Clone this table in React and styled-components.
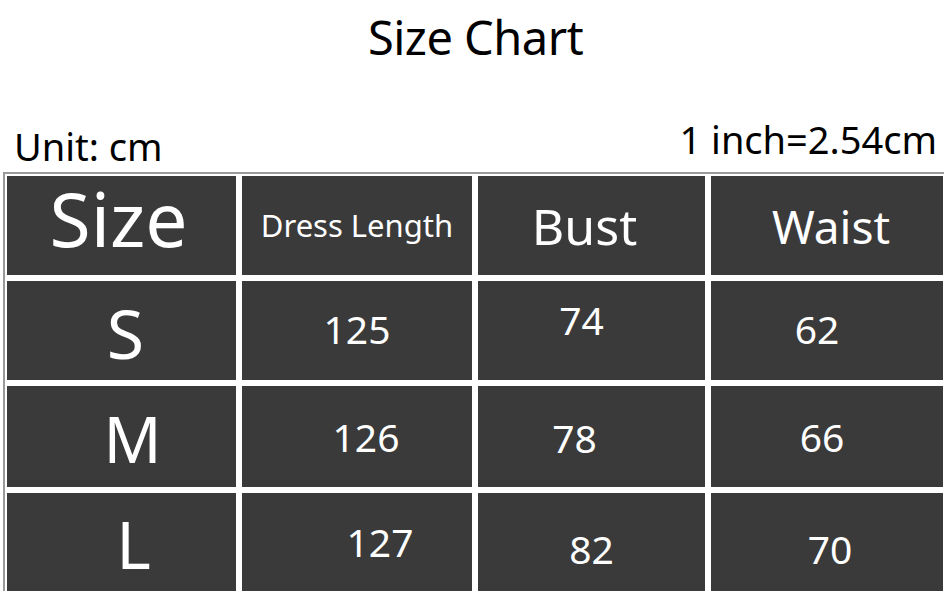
import React from 'react';
import styled, { createGlobalStyle } from "styled-components";

const GlobalStyle = createGlobalStyle`
  body{
    margin: 0;
    background: #ffffff;
    font-family: "Noto Sans", "Open Sans", sans-serif;
  }
`;

const header = [
    { label: 'Size', size: 75, dx: -3, dy: -7 },
    { label: 'Dress Length', size: 31, dx: 0, dy: 0 },
    { label: 'Bust', size: 50, dx: -7, dy: 0 },
    { label: 'Waist', size: 46, dx: 4, dy: 0 },
];

const rows = [
    [{ v: 'S', size: 68, dx: 4, dy: 2 }, { v: '125', dx: 0, dy: -2 }, { v: '74', dx: -10, dy: -11 }, { v: '62', dx: -10, dy: -2 }],
    [{ v: 'M', size: 64, dx: 11, dy: 2 }, { v: '126', dx: 9, dy: 0 }, { v: '78', dx: -17, dy: 1 }, { v: '66', dx: -5, dy: 0 }],
    [{ v: 'L', size: 66, dx: 12, dy: 1 }, { v: '127', dx: 23, dy: -1 }, { v: '82', dx: 0, dy: 6 }, { v: '70', dx: 3, dy: 6 }],
];

export default function App(){
    return(
        <Page>
            <GlobalStyle/>
            <Title>Size Chart</Title>
            <InfoRow>
                <span className="unit">Unit: cm</span>
                <span className="inch">1 inch=2.54cm</span>
            </InfoRow>
            <Table>
                {header.map((h) => (
                    <Cell key={h.label}>
                        <Label size={h.size} dx={h.dx} dy={h.dy}>{h.label}</Label>
                    </Cell>
                ))}
                {rows.map((row, r) => row.map((c, i) => (
                    <Cell key={r + '-' + i}>
                        <Label size={c.size || 39} dx={c.dx} dy={c.dy}>{c.v}</Label>
                    </Cell>
                )))}
            </Table>
        </Page>
    )
}

const Page = styled.div`
  width: 946px;
  height: 594px;
  overflow: hidden;
  color: #000;
`;

const Title = styled.div`
  text-align: center;
  font-size: 47px;
  line-height: 1;
  padding: 14px 0 0 5px;
  height: 92px;
  box-sizing: border-box;
  letter-spacing: -0.5px;
`;

const InfoRow = styled.div`
  display: flex;
  justify-content: space-between;
  align-items: flex-start;
  height: 80px;
  padding: 0 9px 0 14px;
  font-size: 38px;
  line-height: 1;
  .unit{
    margin-top: 35px;
  }
  .inch{
    margin-top: 28px;
  }
`;

const Table = styled.div`
  display: grid;
  grid-template-columns: 229px 230px 227px 232px;
  grid-template-rows: 99px 99px 101px 98px;
  gap: 6px;
  margin-left: 3px;
  padding: 2px 0 0 2px;
  border-top: 2px solid #9a9a9a;
  border-left: 2px solid #9a9a9a;
  width: 941px;
  box-sizing: border-box;
`;

const Cell = styled.div`
  background: #3a3a3a;
  display: flex;
  align-items: center;
  justify-content: center;
  color: #ffffff;
`;

const Label = styled.span`
  font-size: ${props => props.size}px;
  line-height: 1;
  transform: translate(${props => props.dx}px, ${props => props.dy}px);
`;
